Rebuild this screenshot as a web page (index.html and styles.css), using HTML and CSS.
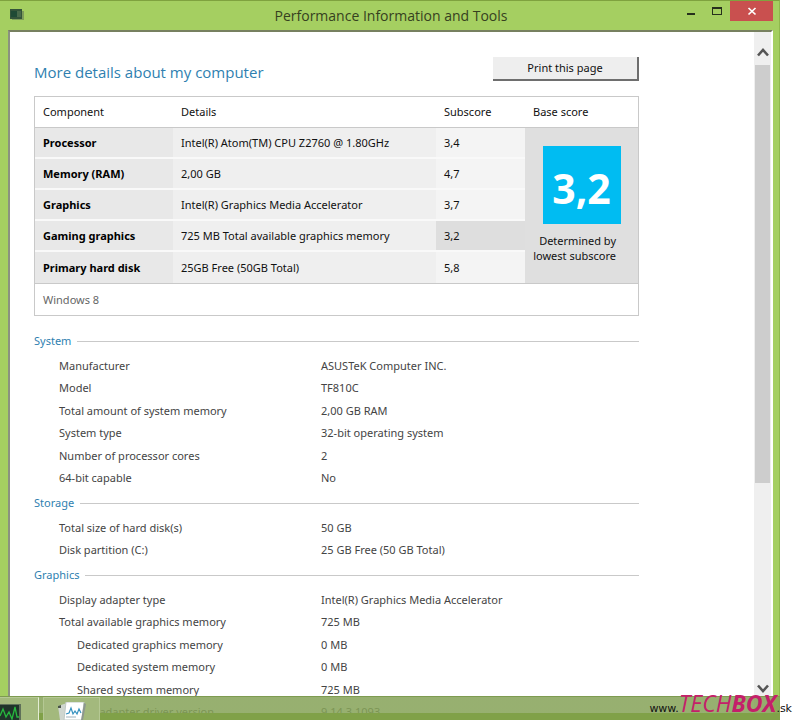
FILE: index.html
```html
<!DOCTYPE html>
<html lang="en">
<head>
<meta charset="utf-8">
<title>Performance Information and Tools</title>
<link rel="stylesheet" href="styles.css">
</head>
<body>
<main class="window">
  <header class="titlebar">
    <svg class="app-icon" viewBox="0 0 14 12" aria-hidden="true"><path d="M2 2h12v9H2z" fill="#7f9d5a"/><path d="M0 0h12v10H0z" fill="#34543a"/><path d="M1 2h6v6H1z" fill="#1f4a35"/><path d="M7 2h4v6H7z" fill="#48694a"/></svg>
    <h1 class="title">Performance Information and Tools</h1>
    <div class="controls">
      <button class="control" aria-label="Minimize"><svg viewBox="0 0 10 10"><path d="M1 7h8v2H1z" fill="#26301c"/></svg></button>
      <button class="control" aria-label="Maximize"><svg viewBox="0 0 10 10"><path d="M0 1h10v8H0zM1 3v5h8V3z" fill="#26301c" fill-rule="evenodd"/></svg></button>
      <button class="control close" aria-label="Close"><svg viewBox="0 0 10 10"><path d="M1.500 2l7 6.500M8.500 2l-7 6.500" stroke="#fff" stroke-width="1.700" fill="none"/></svg></button>
    </div>
  </header>
  <div class="client">
    <div class="page">
      <div class="page-head">
        <h2 class="heading">More details about my computer</h2>
        <button class="print">Print this page</button>
      </div>
      <table class="scores">
        <colgroup><col class="c-name"><col class="c-detail"><col class="c-sub"><col class="c-base"></colgroup>
        <thead><tr><th>Component</th><th>Details</th><th>Subscore</th><th>Base score</th></tr></thead>
        <tbody>
          <tr><th>Processor</th><td>Intel(R) Atom(TM) CPU Z2760 @ 1.80GHz</td><td class="sub">3,4</td>
            <td class="base" rowspan="5"><div class="tile">3,2</div><p class="note">Determined by<br>lowest subscore</p></td></tr>
          <tr><th>Memory (RAM)</th><td>2,00 GB</td><td class="sub">4,7</td></tr>
          <tr><th>Graphics</th><td>Intel(R) Graphics Media Accelerator</td><td class="sub">3,7</td></tr>
          <tr><th>Gaming graphics</th><td>725 MB Total available graphics memory</td><td class="sub lowest">3,2</td></tr>
          <tr><th>Primary hard disk</th><td>25GB Free (50GB Total)</td><td class="sub">5,8</td></tr>
        </tbody>
        <tfoot><tr><td colspan="4">Windows 8</td></tr></tfoot>
      </table>
      <section>
        <h3 class="group">System</h3>
        <table class="facts">
          <tr><th>Manufacturer</th><td>ASUSTeK Computer INC.</td></tr>
          <tr><th>Model</th><td>TF810C</td></tr>
          <tr><th>Total amount of system memory</th><td>2,00 GB RAM</td></tr>
          <tr><th>System type</th><td>32-bit operating system</td></tr>
          <tr><th>Number of processor cores</th><td>2</td></tr>
          <tr><th>64-bit capable</th><td>No</td></tr>
        </table>
      </section>
      <section>
        <h3 class="group">Storage</h3>
        <table class="facts">
          <tr><th>Total size of hard disk(s)</th><td>50 GB</td></tr>
          <tr><th>Disk partition (C:)</th><td>25 GB Free (50 GB Total)</td></tr>
        </table>
      </section>
      <section>
        <h3 class="group">Graphics</h3>
        <table class="facts">
          <tr><th>Display adapter type</th><td>Intel(R) Graphics Media Accelerator</td></tr>
          <tr><th>Total available graphics memory</th><td>725 MB</td></tr>
          <tr><th class="nested">Dedicated graphics memory</th><td>0 MB</td></tr>
          <tr><th class="nested">Dedicated system memory</th><td>0 MB</td></tr>
          <tr><th class="nested">Shared system memory</th><td>725 MB</td></tr>
          <tr><th>Display adapter driver version</th><td>9.14.3.1093</td></tr>
        </table>
      </section>
    </div>
    <div class="scrollbar">
      <button class="arrow" aria-label="Scroll up"><svg viewBox="0 0 12 10"><path d="M1 8.500l5-5.500 5 5.500" stroke="#555" stroke-width="2.600" fill="none"/></svg></button>
      <div class="track"><div class="thumb"></div></div>
      <button class="arrow" aria-label="Scroll down"><svg viewBox="0 0 12 10"><path d="M1 1.500l5 5.500 5-5.500" stroke="#555" stroke-width="2.600" fill="none"/></svg></button>
    </div>
  </div>
</main>
<nav class="taskbar">
  <button class="task first" aria-label="Task Manager"><svg viewBox="0 0 22 16"><path d="M0 0h21v16H0z" fill="#5f7059"/><path d="M0 1h19v15H0z" fill="#20342a"/><path d="M0 12l3-7 3 8 3-5 3 7 3-12 2 10h2" stroke="#27b83e" stroke-width="1.300" fill="none"/></svg></button>
  <button class="task" aria-label="Performance Information and Tools"><svg viewBox="0 0 30 18"><path d="M1 4l9-3v17H3z" fill="#cfd6cf"/><path d="M1 4l3-1v3H1z" fill="#4a5548"/><path d="M9 0h18l-2 18H7z" fill="#fff" stroke="#bfc8c4"/><path d="M27 1l2 1-3 16h-2z" fill="#8d978e"/><path d="M9 12l3-1 2-5 2 6 2-3 2 3 2-5 2 4" stroke="#3491bf" stroke-width="1.200" fill="none"/><path d="M9 15h10" stroke="#9eb1bb"/></svg></button>
</nav>
<div class="watermark"><span>www.</span><span class="brand">TECH<b>BOX</b></span><span>.sk</span></div>
</body>
</html>
```
FILE: styles.css
```css
* { box-sizing: border-box; }
body {
  margin: 0;
  height: 100vh;
  overflow: hidden;
  background: #fff;
  color: #111;
  font: 11px/16px "Noto Sans", "Open Sans", sans-serif;
}
button { border: 0; padding: 0; margin: 0; background: none; font: inherit; color: inherit; }
svg { display: block; }
h1, h2, h3, p { margin: 0; font-size: inherit; font-weight: 400; }
th { font-weight: 400; text-align: left; }

.window {
  display: flex;
  flex-direction: column;
  height: 100vh;
  margin-right: 19px;
  padding: 0 6px 0 8px;
  background: #a5cf61;
  border-top: 1px solid #7fa23f;
  border-right: 1px solid #8fb84d;
}
.titlebar { display: flex; align-items: flex-start; height: 29px; }
.app-icon { width: 14px; height: 12px; margin: 8px 0 0 2px; }
.title { flex: 1; padding-left: 80px; text-align: center; font: 14px/29px "Open Sans", sans-serif; color: #36411f; }
.controls { display: flex; }
.control { display: grid; place-items: center; width: 26px; height: 20px; }
.control svg { width: 10px; height: 10px; }
.close { width: 43px; background: #c9504f; }

.client {
  display: flex;
  flex: 1;
  min-height: 0;
  background: #fff;
  border: 2px solid #80896f;
  border-color: #778060 #fff #fff #8b9280;
  border-bottom: 0;
}
.page { flex: 1; min-width: 0; padding: 24px 115px 0 24px; overflow: hidden; }
.page-head { display: flex; justify-content: space-between; margin-bottom: 8px; }
.heading { font: 15px/32px "Open Sans", sans-serif; color: #2f7fb0; }
.print {
  width: 146px;
  height: 24px;
  margin-top: 1px;
  background: #eee;
  border-right: 2px solid #6e6e6e;
  border-bottom: 2px solid #6e6e6e;
}

.scores {
  width: 100%;
  table-layout: fixed;
  border: 1px solid #c9c9c9;
  border-spacing: 0;
}
.c-name { width: 138px; }
.c-detail { width: 263px; }
.c-sub { width: 89px; }
.scores th, .scores td { height: 31px; padding: 0 8px; }
.scores thead th { border-bottom: 1px solid #c9c9c9; }
.scores tbody th { font-weight: 700; background: #e8e8e8; border-bottom: 2px solid #f9f9f9; color: #000; }
.scores tbody td { background: #efefef; border-bottom: 2px solid #f9f9f9; }
.scores tbody tr:last-child > * { border-bottom: 0; }
.scores .sub { background: #f4f4f4; }
.scores .lowest { background: #dedede; }
.scores .base { background: #dfdfdf; border: 0; vertical-align: top; padding-top: 18px; }
.scores tfoot td { height: 32px; border-top: 1px solid #c9c9c9; color: #666; }
.tile {
  width: 78px;
  height: 78px;
  margin: 0 auto 9px;
  background: #00bcf2;
  color: #fff;
  font: 700 41px/84px "Open Sans", sans-serif;
  text-align: center;
}
.note { width: 83px; text-align: right; line-height: 15px; white-space: nowrap; }

section:first-of-type { margin-top: 17px; }
.group { display: flex; align-items: center; gap: 6px; margin-bottom: 5px; color: #2f7fb0; }
.group::after { content: ""; flex: 1; height: 1px; background: #c9c9c9; }
.facts { width: 100%; border-spacing: 0; table-layout: fixed; color: #444; margin-bottom: 6px; }
.facts th { width: 287px; padding: 0 0 0 25px; height: 22px; }
.facts tr:nth-child(odd) th { height: 23px; }
.facts td { padding: 0; }
.facts .nested { padding-left: 43px; }

.scrollbar { display: flex; flex-direction: column; width: 17px; padding-bottom: 24px; background: #efefef; }
.arrow { display: grid; place-items: end center; height: 33px; padding-bottom: 8px; }
.arrow:last-child { height: 17px; padding-bottom: 2px; }
.arrow svg { width: 12px; height: 10px; }
.track { flex: 1; padding: 0 1px; }
.thumb { height: 68%; background: #cdcdcd; }

.taskbar {
  position: absolute;
  left: 0;
  right: 19px;
  bottom: 0;
  display: flex;
  gap: 4px;
  height: 24px;
  background: linear-gradient(rgba(133, 162, 87, 0.85) 0 16px, #80a148 16px);
  border-top: 1px solid #7e9b50;
}
.task { display: flex; align-items: flex-end; justify-content: center; width: 57px; border: 1px solid #b5c894; border-bottom: 0; background: #a3b97d; }
.task svg { width: 30px; height: 18px; }
.task.first { width: 39px; justify-content: flex-start; border-left: 0; border-right-color: #e3ecd3; }
.task.first svg { width: 22px; height: 16px; }

.watermark {
  position: absolute;
  right: 7px;
  bottom: 0;
  display: flex;
  align-items: baseline;
  font: 11px/22px "DejaVu Sans", sans-serif;
  color: #111;
}
.brand { font: italic 23px/22px "Open Sans", sans-serif; color: #c4206a; }
.brand b { font-weight: 700; }
```
